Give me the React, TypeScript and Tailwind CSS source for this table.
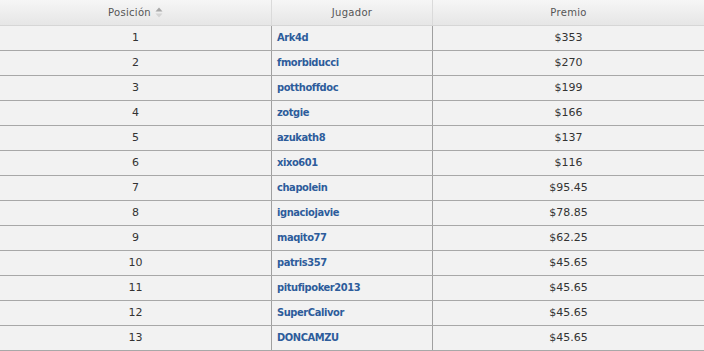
import React from 'react';

interface Row {
  pos: number;
  player: string;
  prize: string;
}

const rows: Row[] = [
  { pos: 1, player: 'Ark4d', prize: '$353' },
  { pos: 2, player: 'fmorbiducci', prize: '$270' },
  { pos: 3, player: 'potthoffdoc', prize: '$199' },
  { pos: 4, player: 'zotgie', prize: '$166' },
  { pos: 5, player: 'azukath8', prize: '$137' },
  { pos: 6, player: 'xixo601', prize: '$116' },
  { pos: 7, player: 'chapolein', prize: '$95.45' },
  { pos: 8, player: 'ignaciojavie', prize: '$78.85' },
  { pos: 9, player: 'maqito77', prize: '$62.25' },
  { pos: 10, player: 'patris357', prize: '$45.65' },
  { pos: 11, player: 'pitufipoker2013', prize: '$45.65' },
  { pos: 12, player: 'SuperCalivor', prize: '$45.65' },
  { pos: 13, player: 'DONCAMZU', prize: '$45.65' },
];

const SortIcon: React.FC = () => (
  <svg width="8" height="11" viewBox="0 0 8 11" className="ml-[4px]">
    <path d="M4 0.5 L7.5 4.5 L0.5 4.5 Z" fill="#a8a8a8" />
    <path d="M0.5 6.5 L7.5 6.5 L4 10.5 Z" fill="#d4d4d4" />
  </svg>
);

const App: React.FC = () => {
  return (
    <div className="w-[704px] h-[351px] overflow-hidden bg-[#f2f2f2] font-['DejaVu_Sans',Verdana,sans-serif]">
      {/* Header */}
      <div className="grid grid-cols-[272px_161px_1fr] h-[26px] bg-gradient-to-b from-[#f6f6f6] via-[#eeeeee] to-[#e6e6e6] border-b border-[#d6d6d6] text-[10px] text-[#555] tracking-[0.3px]">
        <div className="flex items-center justify-center border-r border-[#dadada]">
          <span>Posición</span>
          <SortIcon />
        </div>
        <div className="flex items-center justify-center border-r border-[#dadada]">Jugador</div>
        <div className="flex items-center justify-center">Premio</div>
      </div>

      {/* Rows */}
      {rows.map((r) => (
        <div
          key={r.pos}
          className="grid grid-cols-[272px_161px_1fr] h-[25px] border-b border-[#a8a8a8] text-[11px]"
        >
          <div className="flex items-center justify-center border-r border-[#a0a0a0] text-[#333]">
            {r.pos}
          </div>
          <div className="flex items-center pl-[5px] border-r border-[#a0a0a0] font-bold tracking-[-0.4px] text-[#2d5c9b] font-['DejaVu_Sans_Condensed','DejaVu_Sans',sans-serif]">
            {r.player}
          </div>
          <div className="flex items-center justify-center text-[#333]">{r.prize}</div>
        </div>
      ))}
    </div>
  );
};

export default App;
